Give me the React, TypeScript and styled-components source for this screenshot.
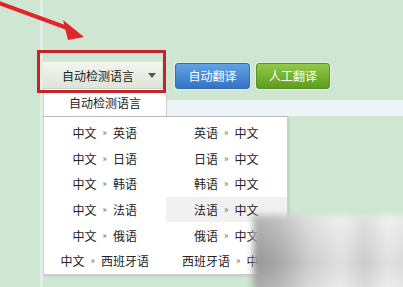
import React from "react";
import styled, { createGlobalStyle } from "styled-components";

const Global = createGlobalStyle`
  html, body { margin: 0; padding: 0; }
  body {
    background: #cfe6d3;
    font-family: "Noto Sans CJK SC", "Noto Sans", sans-serif;
    font-size: 12px;
    color: #333;
    width: 403px;
    height: 287px;
    overflow: hidden;
  }
`;

const Page = styled.div`
  position: relative;
  width: 403px;
  height: 287px;
  overflow: hidden;
`;

const Column = styled.div`
  height: 100%;
  margin-left: 40px;
  border-left: 3px solid #e2efe4;
  padding-top: 62px;
  box-sizing: border-box;
`;

const Toolbar = styled.div`
  display: flex;
  align-items: center;
  height: 27px;
`;

const Select = styled.div`
  box-sizing: border-box;
  width: 119px;
  height: 27px;
  display: flex;
  align-items: center;
  justify-content: space-between;
  padding: 0 6px 0 19px;
  background: linear-gradient(#f2f5ee, #dde5d7);
  border-top: 1px solid #f8fbf6;
  border-bottom: 1px solid #c8d4c4;
  color: #222;
  font-size: 12px;
`;

const Caret = styled.span`
  width: 0;
  height: 0;
  border-left: 4px solid transparent;
  border-right: 4px solid transparent;
  border-top: 5px solid #555;
`;

const Button = styled.div<{ $tone: "blue" | "green" }>`
  box-sizing: border-box;
  width: ${(p) => (p.$tone === "blue" ? 75 : 74)}px;
  height: 26px;
  margin-left: ${(p) => (p.$tone === "blue" ? 13 : 6)}px;
  display: flex;
  align-items: center;
  justify-content: center;
  border-radius: 3px;
  color: #fff;
  font-size: 12px;
  background: ${(p) =>
    p.$tone === "blue"
      ? "linear-gradient(#62a3e6, #3473c4)"
      : "linear-gradient(#93c948, #5c9d20)"};
  border: 1px solid ${(p) => (p.$tone === "blue" ? "#3a6db0" : "#5b9226")};
  box-shadow: 0 0 0 1px rgba(255, 255, 255, 0.35);
`;

const Strip = styled.div`
  margin-top: 11px;
  height: 16px;
  background: #edf3f7;
`;

const Annotation = styled.div`
  position: absolute;
  left: 37px;
  top: 50px;
  width: 129px;
  height: 43px;
  box-sizing: border-box;
  border: 3px solid #c8232b;
  pointer-events: none;
`;

const Arrow = styled.svg`
  position: absolute;
  left: 0;
  top: 0;
`;

const Dropdown = styled.div`
  position: absolute;
  left: 43px;
  top: 89px;
`;

const AutoRow = styled.div`
  box-sizing: border-box;
  width: 124px;
  height: 27px;
  background: #fff;
  border-left: 1px solid #cfcfcf;
  border-right: 1px solid #cfcfcf;
  display: flex;
  align-items: center;
  justify-content: center;
  color: #222;
`;

const Grid = styled.div`
  box-sizing: border-box;
  width: 245px;
  background: #fff;
  border: 1px solid #cfcfcf;
  border-top: 1px solid #bdbdbd;
  padding-top: 3px;
  display: grid;
  grid-template-columns: 1fr 1fr;
  grid-auto-rows: 25.6px;
  box-shadow: 1px 1px 2px rgba(0, 0, 0, 0.12);
`;

const Cell = styled.div<{ $active?: boolean }>`
  display: flex;
  align-items: center;
  justify-content: center;
  white-space: nowrap;
  color: #222;
  background: ${(p) => (p.$active ? "#f1f1f1" : "transparent")};
`;

const Sep = styled.span`
  font-size: 9px;
  color: #666;
  margin: 0 6px;
`;

const Watermark = styled.div`
  position: absolute;
  left: 253px;
  top: 215px;
  width: 160px;
  height: 80px;
  background:
    linear-gradient(180deg, rgba(255,255,255,0.25), rgba(0,0,0,0.05) 60%, rgba(255,255,255,0.2)),
    linear-gradient(90deg, #9c9c9c 0%, #b2b2b2 18%, #d6d6d6 35%, #ebebeb 55%, #d6d6d6 70%, #eeeeee 85%, #dedede 100%);
  filter: blur(3px);
`;

const pairs: [string, string][] = [
  ["英语", "中文"],
  ["日语", "中文"],
  ["韩语", "中文"],
  ["法语", "中文"],
  ["俄语", "中文"],
  ["西班牙语", "中文"],
];

export default function App() {
  return (
    <Page>
      <Global />
      <Column>
        <Toolbar>
          <Select>
            自动检测语言
            <Caret />
          </Select>
          <Button $tone="blue">自动翻译</Button>
          <Button $tone="green">人工翻译</Button>
        </Toolbar>
        <Strip />
      </Column>
      <Dropdown>
        <AutoRow>自动检测语言</AutoRow>
        <Grid>
          {pairs.map(([lang], i) => (
            <React.Fragment key={lang}>
              <Cell>
                中文<Sep>»</Sep>
                {lang}
              </Cell>
              <Cell $active={i === 3}>
                {lang}
                <Sep>»</Sep>中文
              </Cell>
            </React.Fragment>
          ))}
        </Grid>
      </Dropdown>
      <Annotation />
      <Arrow width="100" height="50" viewBox="0 0 100 50">
        <line x1="-4" y1="2" x2="70" y2="29" stroke="#e0262b" strokeWidth="4" />
        <polygon points="84,37 63,20 68,40" fill="#e0262b" />
      </Arrow>
      <Watermark />
    </Page>
  );
}
